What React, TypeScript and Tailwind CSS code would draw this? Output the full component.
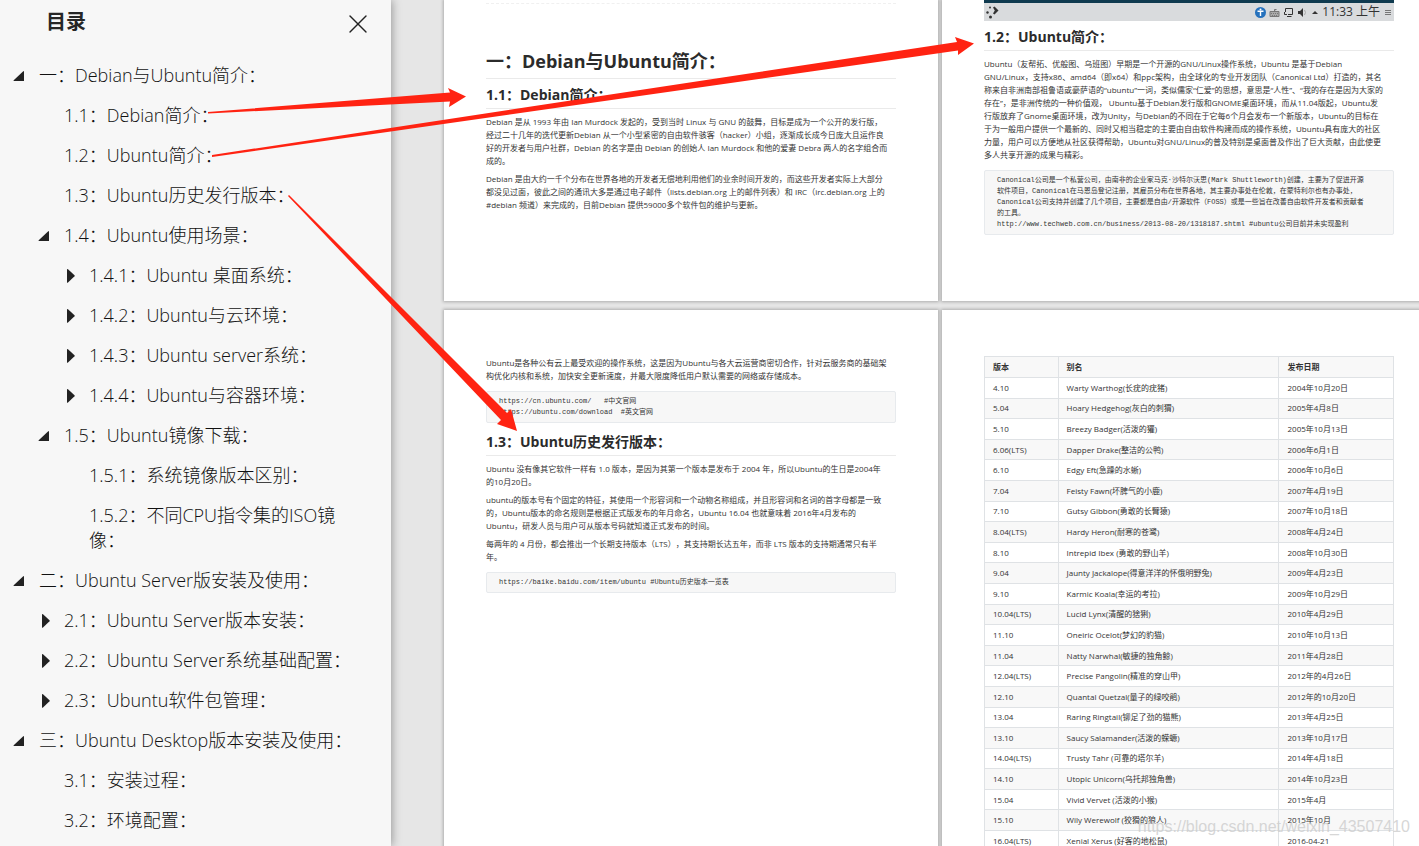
import { X } from "lucide-react";

type TocState = "open" | "closed" | "leaf";

type TocItem = {
  label: string;
  level: 0 | 1 | 2;
  state: TocState;
};

type Release = [version: string, alias: string, date: string];

const tocItems: TocItem[] = [
  { label: "一：Debian与Ubuntu简介：", level: 0, state: "open" },
  { label: "1.1：Debian简介：", level: 1, state: "leaf" },
  { label: "1.2：Ubuntu简介：", level: 1, state: "leaf" },
  { label: "1.3：Ubuntu历史发行版本：", level: 1, state: "leaf" },
  { label: "1.4：Ubuntu使用场景：", level: 1, state: "open" },
  { label: "1.4.1：Ubuntu 桌面系统：", level: 2, state: "closed" },
  { label: "1.4.2：Ubuntu与云环境：", level: 2, state: "closed" },
  { label: "1.4.3：Ubuntu server系统：", level: 2, state: "closed" },
  { label: "1.4.4：Ubuntu与容器环境：", level: 2, state: "closed" },
  { label: "1.5：Ubuntu镜像下载：", level: 1, state: "open" },
  { label: "1.5.1：系统镜像版本区别：", level: 2, state: "leaf" },
  { label: "1.5.2：不同CPU指令集的ISO镜像：", level: 2, state: "leaf" },
  { label: "二：Ubuntu Server版安装及使用：", level: 0, state: "open" },
  { label: "2.1：Ubuntu Server版本安装：", level: 1, state: "closed" },
  { label: "2.2：Ubuntu Server系统基础配置：", level: 1, state: "closed" },
  { label: "2.3：Ubuntu软件包管理：", level: 1, state: "closed" },
  { label: "三：Ubuntu Desktop版本安装及使用：", level: 0, state: "open" },
  { label: "3.1：安装过程：", level: 1, state: "leaf" },
  { label: "3.2：环境配置：", level: 1, state: "leaf" },
];

const releases: Release[] = [
  ["4.10", "Warty Warthog(长疣的疣猪)", "2004年10月20日"],
  ["5.04", "Hoary Hedgehog(灰白的刺猬)", "2005年4月8日"],
  ["5.10", "Breezy Badger(活泼的獾)", "2005年10月13日"],
  ["6.06(LTS)", "Dapper Drake(整洁的公鸭)", "2006年6月1日"],
  ["6.10", "Edgy Eft(急躁的水蜥)", "2006年10月6日"],
  ["7.04", "Feisty Fawn(坏脾气的小鹿)", "2007年4月19日"],
  ["7.10", "Gutsy Gibbon(勇敢的长臂猿)", "2007年10月18日"],
  ["8.04(LTS)", "Hardy Heron(耐寒的苍鹭)", "2008年4月24日"],
  ["8.10", "Intrepid Ibex (勇敢的野山羊)", "2008年10月30日"],
  ["9.04", "Jaunty Jackalope(得意洋洋的怀俄明野兔)", "2009年4月23日"],
  ["9.10", "Karmic Koala(幸运的考拉)", "2009年10月29日"],
  ["10.04(LTS)", "Lucid Lynx(清醒的猞猁)", "2010年4月29日"],
  ["11.10", "Oneiric Ocelot(梦幻的豹猫)", "2010年10月13日"],
  ["11.04", "Natty Narwhal(敏捷的独角鲸)", "2011年4月28日"],
  ["12.04(LTS)", "Precise Pangolin(精准的穿山甲)", "2012年的4月26日"],
  ["12.10", "Quantal Quetzal(量子的绿咬鹃)", "2012年的10月20日"],
  ["13.04", "Raring Ringtail(铆足了劲的猫熊)", "2013年4月25日"],
  ["13.10", "Saucy Salamander(活泼的蝾螈)", "2013年10月17日"],
  ["14.04(LTS)", "Trusty Tahr (可靠的塔尔羊)", "2014年4月18日"],
  ["14.10", "Utopic Unicorn(乌托邦独角兽)", "2014年10月23日"],
  ["15.04", "Vivid Vervet (活泼的小猴)", "2015年4月"],
  ["15.10", "Wily Werewolf (狡猾的狼人)", "2015年10月"],
  ["16.04(LTS)", "Xenial Xerus (好客的地松鼠)", "2016-04-21"],
];

const levelPadding = {
  0: "pl-[10px]",
  1: "pl-[35px]",
  2: "pl-[60px]",
};

const Caret = ({ state }: { state: TocState }) => (
  <svg width="18" height="25" viewBox="0 0 18 25" className="shrink-0 fill-[#222]">
    {state === "open" && <path d="M13 8.5 q1 -1 1 0.5 V18 H4 q-1 0 -0.3 -0.8Z" />}
    {state === "closed" && (
      <path d="M7 6.5 q0 -1 1 -0.3 L14.5 12.2 q0.5 0.5 0 1 L8 19.5 q-1 0.6 -1 -0.3Z" />
    )}
  </svg>
);

const Sidebar = () => (
  <aside className="relative z-10 flex w-[391px] shrink-0 flex-col bg-[#f7f7f7] shadow-[1px_0_9px_rgba(0,0,0,0.35)]">
    <header className="flex items-center justify-between pt-1 pr-[17px] pb-[23px] pl-[46px]">
      <h2 className="text-[20px] leading-8 font-bold text-[#262626]">目录</h2>
      <button type="button" aria-label="关闭" className="pt-1 text-[#222]">
        <X size={32} strokeWidth={1} />
      </button>
    </header>
    <nav>
      <ul className="flex flex-col gap-[15px]">
        {tocItems.map(({ label, level, state }) => (
          <li
            key={label}
            className={`flex items-start gap-[11px] pr-[25px] ${levelPadding[level]}`}
          >
            <Caret state={state} />
            <a
              href="#"
              className="text-[18px] leading-[25px] font-light text-[#111]"
            >
              {label}
            </a>
          </li>
        ))}
      </ul>
    </nav>
  </aside>
);

const SectionHeading = ({ children }: { children: string }) => (
  <h2 className="mb-[6px] border-b border-[#eaeaea] pt-[6px] pb-[3px] text-[14px] leading-[20px] font-bold text-[#2b2b2b]">
    {children}
  </h2>
);

const Paragraph = ({ children }: { children: string }) => (
  <p className="mb-[5px] text-[8px] leading-[13px] whitespace-pre text-[#333]">
    {children}
  </p>
);

const CodeBlock = ({ children }: { children: string }) => (
  <pre className="mt-[9px] mb-[3px] rounded-xs border border-[#e7eaed] bg-[#f7f7f7] px-3 py-1 font-['Liberation_Mono','Noto_Sans_CJK_SC',monospace] text-[7px] leading-[11px] text-[#333]">
    {children}
  </pre>
);

// --- DESKTOP PANEL SHOWN AT THE TOP OF PAGE 2 ---
const DesktopPanel = () => (
  <div className="flex h-[21px] items-center justify-between border-t-3 border-[#0f3a4f] bg-[#d9dbdd] px-[2px] text-[#333]">
    <svg width="14" height="16" viewBox="0 0 14 16" className="fill-[#333]">
      <circle cx="1.5" cy="8.5" r="1.2" />
      <circle cx="4" cy="3.5" r="1" />
      <circle cx="4.5" cy="13" r="1.5" />
      <path d="M7 3.5 L8.5 2.5 L12.5 6.5 L8.5 10.5 L7 9.5 L8.8 6.5Z" />
    </svg>
    <div className="flex items-center gap-[3px]">
      <svg width="11" height="11" viewBox="0 0 11 11">
        <circle cx="5.5" cy="5.5" r="5.5" fill="#2672bd" />
        <circle cx="5.5" cy="2.5" r="1" fill="#fff" />
        <path d="M2.5 4.2 H8.5 M5.5 4.2 V9" stroke="#fff" strokeWidth="1.4" fill="none" />
      </svg>
      <svg width="11" height="11" viewBox="0 0 11 11" stroke="#777" fill="none">
        <path d="M1 4.5 H10 V9.5 H1Z M5.5 4.5 V2.5 H7.5" fill="#aaa" />
        <path d="M2 6.5 H9 M3 8.5 H8" strokeDasharray="1 1" />
      </svg>
      <svg width="11" height="11" viewBox="0 0 11 11" stroke="#333" fill="none">
        <path d="M2.5 5 V1.5 H9.5 V7.5 H5 M1.5 5 V7.5 H4 M4 9.5 H8.5" />
      </svg>
      <svg width="11" height="11" viewBox="0 0 11 11" fill="#333">
        <path d="M1 4 H3 L6 1 V10 L3 7 H1Z" />
        <path d="M7.5 3 Q9.5 5.5 7.5 8" stroke="#aaa" fill="none" />
      </svg>
      <svg width="8" height="11" viewBox="1 0 8 11" fill="#333">
        <path d="M2 7 L5 4 L8 7Z" />
      </svg>
      <span className="text-[12px] leading-4">11:33 上午</span>
      <svg width="9" height="11" viewBox="0 0 9 11" stroke="#777">
        <path d="M2 3.5 H8 M2 5.5 H8 M2 7.5 H8" />
      </svg>
    </div>
  </div>
);

const pageClass = "bg-white px-[42px] shadow-[0_0_3px_1px_rgba(0,0,0,0.25)]";

const DebianPage = () => (
  <section className={pageClass}>
    <div className="h-1 border-b border-dashed border-[#f0f0f0]" />
    <h1 className="border-b border-[#eaeaea] pt-[45px] pb-[5px] text-[18px] leading-6 font-bold text-[#2b2b2b]">
      一：Debian与Ubuntu简介：
    </h1>
    <SectionHeading>1.1：Debian简介：</SectionHeading>
    <Paragraph>
      {`Debian 是从 1993 年由 Ian Murdock 发起的，受到当时 Linux 与 GNU 的鼓舞，目标是成为一个公开的发行版，
经过二十几年的迭代更新Debian 从一个小型紧密的自由软件骇客（hacker）小组，逐渐成长成今日庞大且运作良
好的开发者与用户社群，Debian 的名字是由 Debian 的创始人 Ian Murdock 和他的爱妻 Debra 两人的名字组合而
成的。`}
    </Paragraph>
    <Paragraph>
      {`Debian 是由大约一千个分布在世界各地的开发者无偿地利用他们的业余时间开发的，而这些开发者实际上大部分
都没见过面，彼此之间的通讯大多是通过电子邮件（lists.debian.org 上的邮件列表）和 IRC（irc.debian.org 上的
#debian 频道）来完成的，目前Debian 提供59000多个软件包的维护与更新。`}
    </Paragraph>
  </section>
);

const UbuntuPage = () => (
  <section className={pageClass}>
    <DesktopPanel />
    <SectionHeading>1.2：Ubuntu简介：</SectionHeading>
    <Paragraph>
      {`Ubuntu（友帮拓、优般图、乌班图）早期是一个开源的GNU/Linux操作系统，Ubuntu 是基于Debian
GNU/Linux，支持x86、amd64（即x64）和ppc架构，由全球化的专业开发团队（Canonical Ltd）打造的，其名
称来自非洲南部祖鲁语或豪萨语的“ubuntu”一词，类似儒家“仁爱”的思想，意思是“人性”、“我的存在是因为大家的
存在”，是非洲传统的一种价值观， Ubuntu基于Debian发行版和GNOME桌面环境，而从11.04版起，Ubuntu发
行版放弃了Gnome桌面环境，改为Unity，与Debian的不同在于它每6个月会发布一个新版本，Ubuntu的目标在
于为一般用户提供一个最新的、同时又相当稳定的主要由自由软件构建而成的操作系统，Ubuntu具有庞大的社区
力量，用户可以方便地从社区获得帮助，Ubuntu对GNU/Linux的普及特别是桌面普及作出了巨大贡献，由此使更
多人共享开源的成果与精彩。`}
    </Paragraph>
    <CodeBlock>
      {`Canonical公司是一个私营公司，由南非的企业家马克·沙特尔沃思(Mark Shuttleworth)创建，主要为了促进开源
软件项目，Canonical在马恩岛登记注册，其雇员分布在世界各地，其主要办事处在伦敦，在蒙特利尔也有办事处，
Canonical公司支持并创建了几个项目，主要都是自由/开源软件（FOSS）或是一些旨在改善自由软件开发者和贡献者
的工具。
http://www.techweb.com.cn/business/2013-08-20/1318187.shtml #ubuntu公司目前并未实现盈利`}
    </CodeBlock>
  </section>
);

const HistoryPage = () => (
  <section className={`${pageClass} pt-[46px]`}>
    <Paragraph>
      {`Ubuntu是各种公有云上最受欢迎的操作系统，这是因为Ubuntu与各大云运营商密切合作，针对云服务商的基础架
构优化内核和系统，加快安全更新速度，并最大限度降低用户默认需要的网络或存储成本。`}
    </Paragraph>
    <CodeBlock>
      {`https://cn.ubuntu.com/   #中文官网
https://ubuntu.com/download  #英文官网`}
    </CodeBlock>
    <SectionHeading>1.3：Ubuntu历史发行版本：</SectionHeading>
    <Paragraph>
      {`Ubuntu 没有像其它软件一样有 1.0 版本，是因为其第一个版本是发布于 2004 年，所以Ubuntu的生日是2004年
的10月20日。`}
    </Paragraph>
    <Paragraph>
      {`ubuntu的版本号有个固定的特征，其使用一个形容词和一个动物名称组成，并且形容词和名词的首字母都是一致
的，Ubuntu版本的命名规则是根据正式版发布的年月命名，Ubuntu 16.04 也就意味着 2016年4月发布的
Ubuntu，研发人员与用户可从版本号码就知道正式发布的时间。`}
    </Paragraph>
    <Paragraph>
      {`每两年的 4 月份，都会推出一个长期支持版本（LTS），其支持期长达五年，而非 LTS 版本的支持期通常只有半
年。`}
    </Paragraph>
    <CodeBlock>{`https://baike.baidu.com/item/ubuntu #Ubuntu历史版本一览表`}</CodeBlock>
  </section>
);

const ReleasesPage = () => (
  <section className={`${pageClass} pt-[46px]`}>
    <table className="h-[496px] w-full table-fixed border-collapse text-left text-[8px] leading-[12px] text-[#333]">
      <colgroup>
        <col className="w-[18%]" />
        <col />
        <col className="w-[28%]" />
      </colgroup>
      <thead>
        <tr className="h-[21px] bg-[#f8f8f8]">
          {["版本", "别名", "发布日期"].map((title) => (
            <th key={title} className="border border-[#dfe2e5] px-2 font-bold">
              {title}
            </th>
          ))}
        </tr>
      </thead>
      <tbody>
        {releases.map((release) => (
          <tr key={release[0]} className="even:bg-[#f8f8f8]">
            {release.map((cell) => (
              <td key={cell} className="border border-[#dfe2e5] px-2">
                {cell}
              </td>
            ))}
          </tr>
        ))}
      </tbody>
    </table>
  </section>
);

// --- RED ARROWS FROM THE OUTLINE TO THE PAGES ---
const Arrows = () => (
  <svg className="pointer-events-none absolute inset-0 z-20 h-full w-full fill-[#ff2312]">
    <polygon points="208,112 450,92.5 448,88 466,96.5 449,107 450,101.5 208,113.5" />
    <polygon points="212,155 957,42 955,37 974,43.5 958,55 958,50.5 212,157" />
    <polygon points="288,196 289,195 507,413 511,409 517,431 497,424 501,420" />
  </svg>
);

export default function App() {
  return (
    <div className="relative flex h-screen overflow-hidden bg-[#e6e6e6] font-['Open_Sans','Noto_Sans_CJK_SC',sans-serif] [text-spacing-trim:space-all]">
      <Sidebar />
      <main className="-mr-[17px] grid min-w-0 flex-1 grid-cols-2 grid-rows-[301px_1fr] gap-x-1 gap-y-[9px] pl-[53px]">
        <DebianPage />
        <UbuntuPage />
        <HistoryPage />
        <ReleasesPage />
      </main>
      <Arrows />
      <p className="absolute right-[9px] bottom-[9px] z-30 font-['Liberation_Sans',sans-serif] text-[16px] leading-5 text-[#ccc]/80">
        https://blog.csdn.net/weixin_43507410
      </p>
    </div>
  );
}
